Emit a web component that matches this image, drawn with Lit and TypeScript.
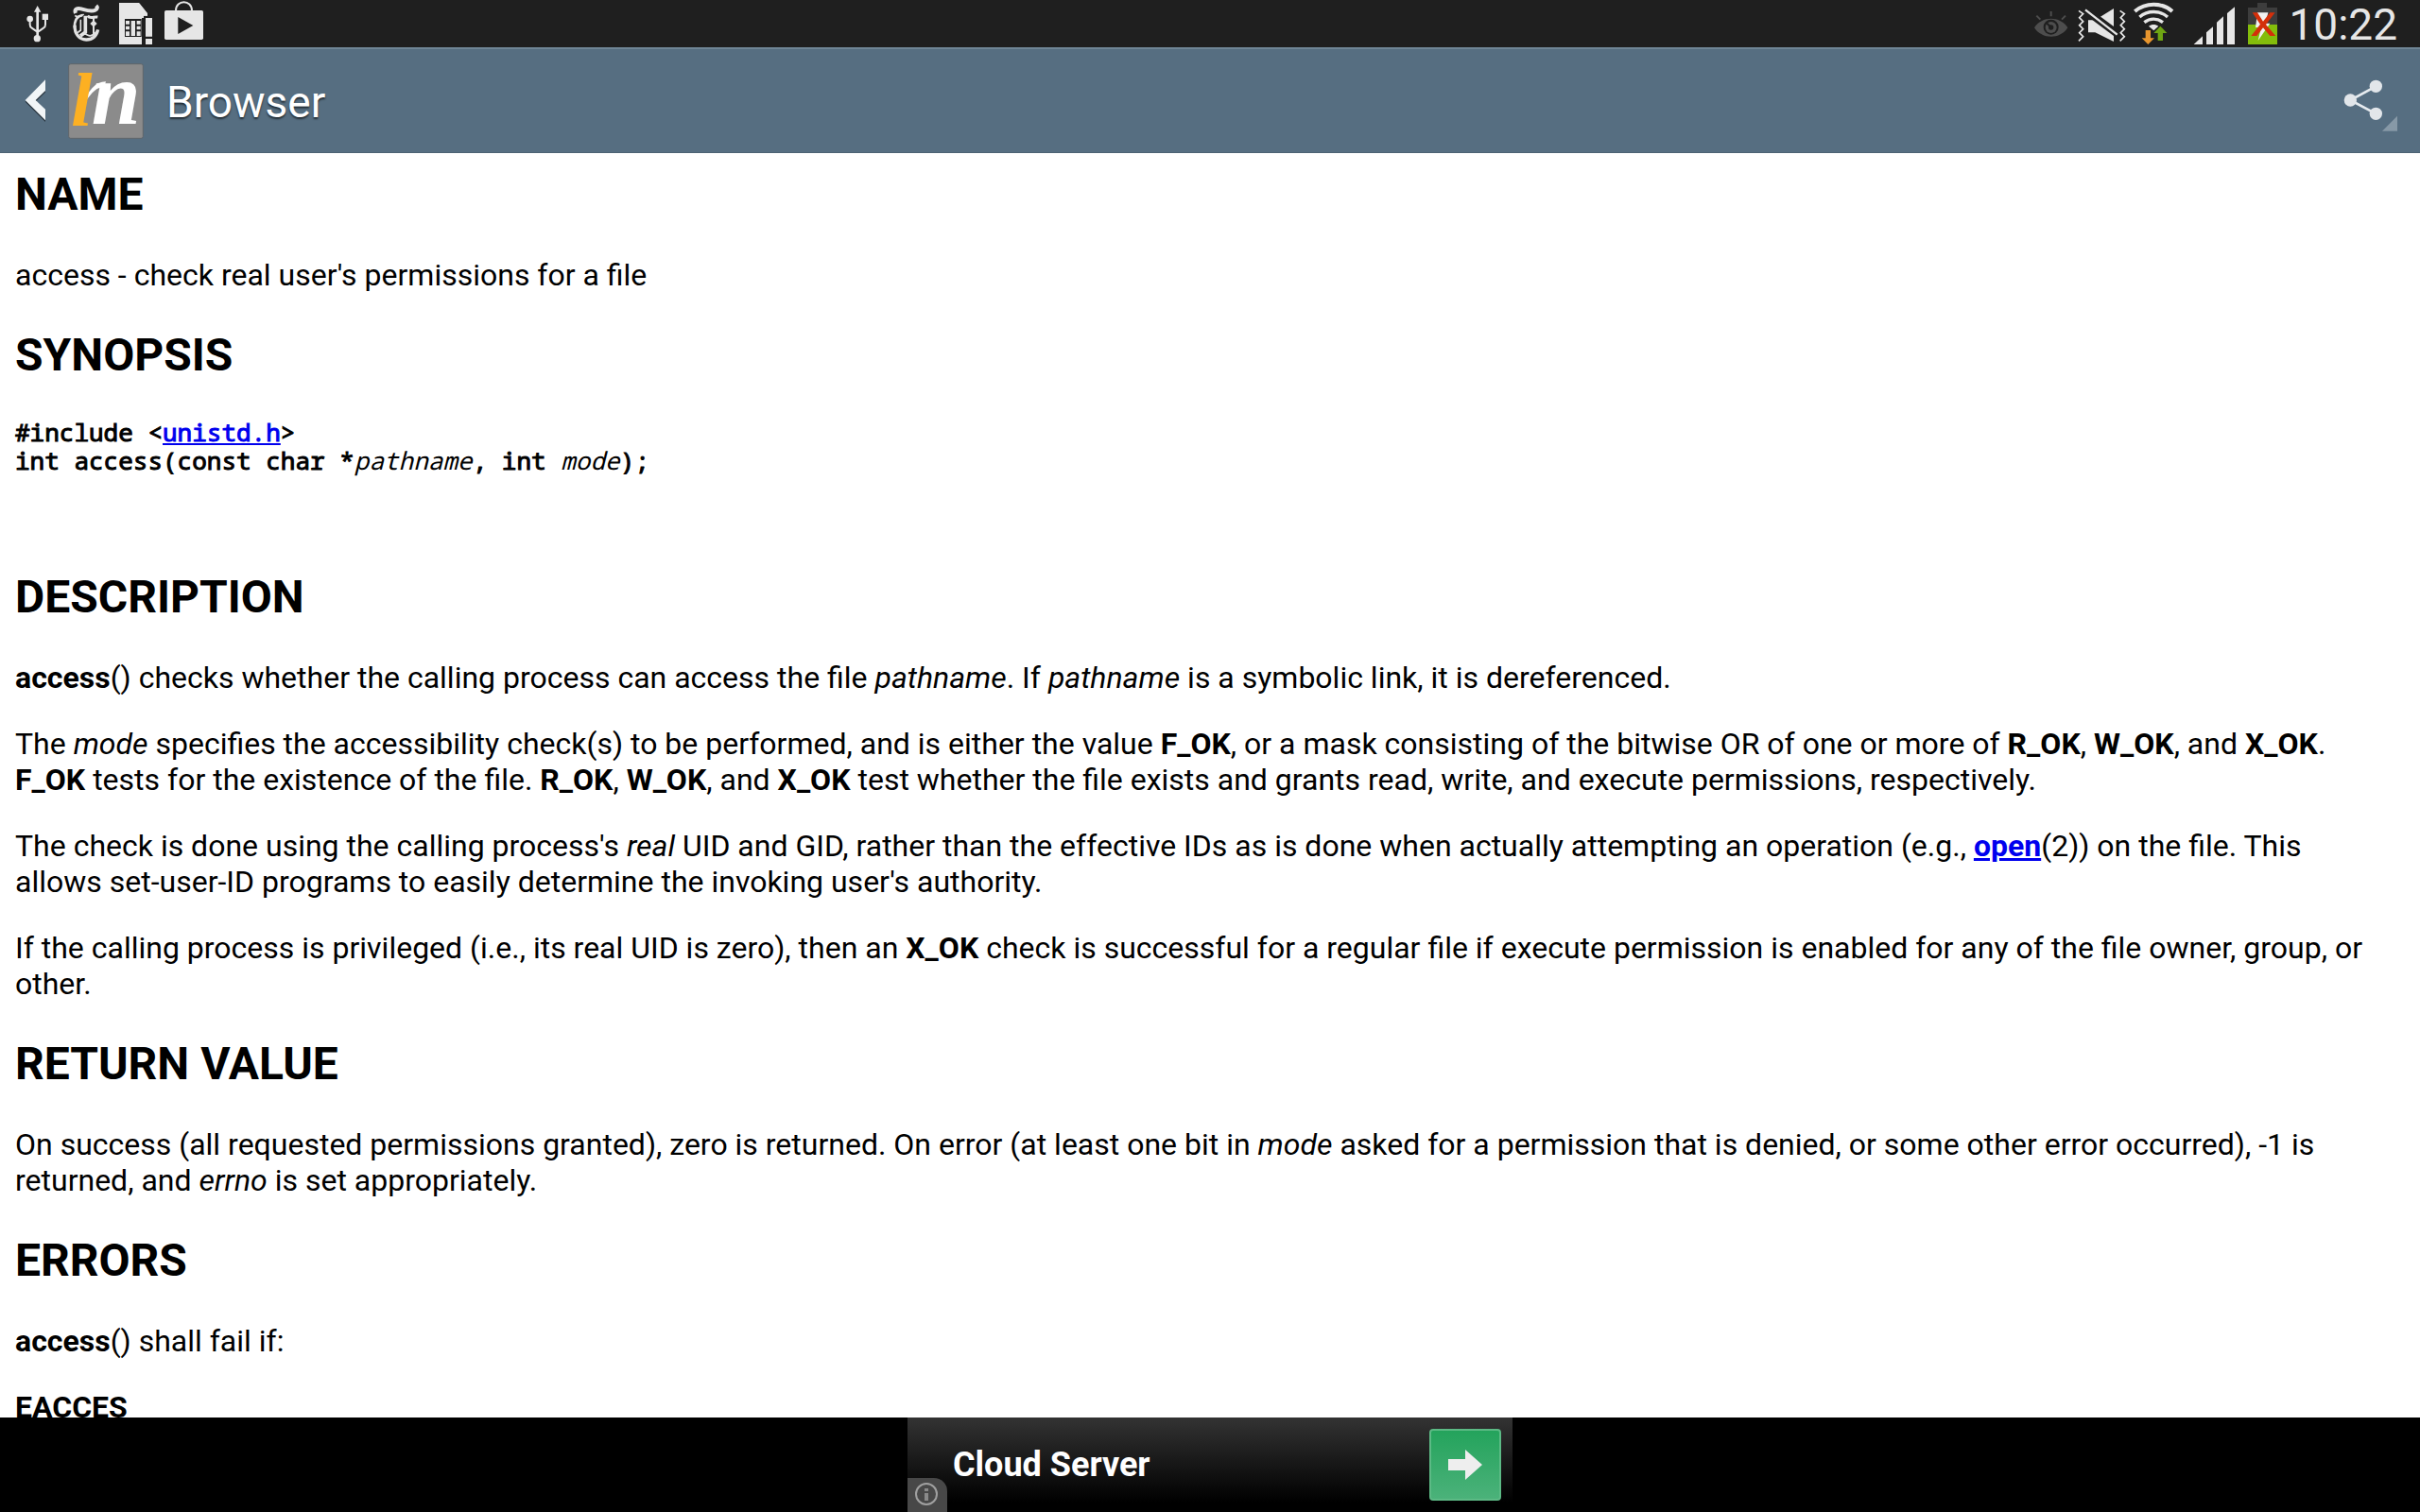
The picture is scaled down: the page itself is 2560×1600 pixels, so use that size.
import { LitElement, html, css } from "lit";
import { customElement } from "lit/decorators.js";

@customElement("status-bar")
class StatusBar extends LitElement {
  static styles = css`
    :host {
      display: flex;
      align-items: center;
      justify-content: space-between;
      height: 50px;
      padding: 0 24px 0 15px;
      background: #1f1f1f;
      color: #e6e6e6;
      font-family: Roboto, sans-serif;
    }
    .group {
      display: flex;
      align-items: center;
      gap: 4px;
    }
    .icon {
      display: block;
      height: 50px;
    }
    .clock {
      font-size: 46px;
      line-height: 54px;
      padding: 2px 0 0 1px;
    }
  `;

  render() {
    return html`
      <div class="group">
        <svg class="icon" width="48" viewBox="45 0 144 150" fill="#e6e6e6" aria-hidden="true">
          <path d="M119 18l11 20h-22z" />
          <rect x="115" y="34" width="8" height="84" />
          <circle cx="118" cy="122" r="11" />
          <circle cx="95" cy="60" r="10" />
          <rect x="134" y="44" width="19" height="19" />
          <path d="M95 66v12q0 8 6 11l16 11M144 62v16q0 8-6 11l-16 11" fill="none" stroke="#e6e6e6" stroke-width="6" />
        </svg>
        <svg class="icon" width="48" viewBox="201 0 144 150" aria-hidden="true">
          <g fill="none" stroke="#e2e2e2">
            <path d="M240 42c-5-12 4-18 18-14c18 5 32 10 44 4c8-4 8-9 3-14" stroke-width="12" />
            <path d="M238 49c6 7 20 4 28-4" stroke-width="5" />
            <path d="M262 48c-22 4-26 20-25 40" stroke-width="8" />
            <path d="M237 80c0 28 14 46 37 46c20 0 32-12 37-32" stroke-width="10" />
            <path d="M271 50v52l-16 12" stroke-width="11" />
            <path d="M256 62v34l-10 8" stroke-width="5" />
            <path d="M255 112c8-8 16-6 24 0c9 5 18 0 30-14" stroke-width="5" />
            <path d="M297 52v58" stroke-width="6" />
            <path d="M278 50c8 12 20 2 32 4" stroke-width="9" />
          </g>
          <path d="M286 75l11-11 11 11-11 11z" fill="#e2e2e2" />
        </svg>
        <svg class="icon" width="48" viewBox="357 0 144 150" aria-hidden="true">
          <path d="M378 9h63l27 34v14h-18v84h-72z" fill="#e6e6e6" />
          <rect x="396" y="60" width="53" height="57" fill="#1f1f1f" />
          <path d="M399 66h12v11h-12zM399 83h12v11h-12zM399 100h12v14h-12zM416 66h13v48h-13zM434 66h12v11h-12zM434 83h12v11h-12zM434 100h12v14h-12z" fill="#e6e6e6" />
          <path d="M456 50h34v96h-34z" fill="#1f1f1f" />
          <path d="M441 9l27 34v7h-12z" fill="#e6e6e6" />
          <path d="M462 57h21v59h-21zM462 123h21v18h-21z" fill="#e6e6e6" />
        </svg>
        <svg class="icon" width="48" viewBox="513 0 144 150" aria-hidden="true">
          <rect x="522" y="33" width="123" height="93" rx="5" fill="#e6e6e6" />
          <path d="M558 34c0-36 51-36 51 0" fill="none" stroke="#e6e6e6" stroke-width="6" />
          <path d="M565 54v54l48-27z" fill="#1f1f1f" />
        </svg>
      </div>
      <div class="group">
        <svg class="icon" width="40" viewBox="30 0 120 150" aria-hidden="true">
          <path d="M36 88c24-38 82-38 106 0c-24 38-82 38-106 0z" fill="#4d4d4d" />
          <circle cx="89" cy="86" r="24" fill="#1f1f1f" />
          <circle cx="89" cy="87" r="18" fill="#4d4d4d" />
          <path d="M89 87l-15-15" stroke="#1f1f1f" stroke-width="6" />
          <circle cx="89" cy="87" r="8" fill="#1f1f1f" />
          <path d="M89 36v16M43 50l12 12M135 50l-12 12" stroke="#4d4d4d" stroke-width="6" />
        </svg>
        <svg class="icon" width="58" viewBox="162 0 174 150" aria-hidden="true">
          <path d="M207 64v39h22l59 29V27l-59 37z" fill="#e6e6e6" />
          <path d="M190 26L308 114" stroke="#1f1f1f" stroke-width="24" />
          <path d="M198 31L299 110" stroke="#e6e6e6" stroke-width="7" />
          <path d="M177 34l14 10-12 12 12 12-12 12 12 12-12 12 12 12-14 14M308 34l14 10-12 12 12 12-12 12 12 12-12 12 12 12-14 14" fill="none" stroke="#e6e6e6" stroke-width="5" />
        </svg>
        <svg class="icon" width="44" viewBox="348 0 132 150" aria-hidden="true">
          <g fill="none" stroke="#e6e6e6">
            <path d="M355 36c34-29 86-29 119 0" stroke-width="12" />
            <path d="M370 54c26-22 64-22 89 0" stroke-width="10" />
            <path d="M385 71c18-14 41-14 59 0" stroke-width="10" />
          </g>
          <path d="M399 83c9-7 22-7 31 0l-15 14z" fill="#e6e6e6" />
          <path d="M389 96h16v25h12l-20 20-20-20h12z" fill="#e8962e" />
          <path d="M428 129h16v-24h13l-21-22-21 22h13z" fill="#6fa513" />
        </svg>
        <svg class="icon" width="62" viewBox="492 0 186 150" aria-hidden="true">
          <path d="M542 141l28-26v26zM582 103l21-18v56h-21zM615 71l21-19v89h-21zM648 42l24-20v119h-24z" fill="#e6e6e6" />
        </svg>
        <svg class="icon" width="46" viewBox="690 0 138 150" aria-hidden="true">
          <path d="M744 9h30v15h33v54h-93V24h30z" fill="#3d3d3d" />
          <rect x="714" y="78" width="93" height="63" fill="#84bd0b" />
          <path d="M744 40h34l-8 34h14l-38 55 10-42h-18z" fill="#f2f2f2" />
          <path d="M728 40h16l18 28 22-28h16l-29 38 31 36h-18l-22-26-20 26h-18l29-37z" fill="#d42f0a" />
        </svg>
        <time class="clock">10:22</time>
      </div>
    `;
  }
}

@customElement("action-bar")
class ActionBar extends LitElement {
  static styles = css`
    :host {
      display: flex;
      align-items: stretch;
      justify-content: space-between;
      box-sizing: border-box;
      height: 112px;
      border-top: 2px solid #6f8595;
      border-bottom: 1px solid #4d6373;
      background: #566e81;
      color: #fff;
      font-family: Roboto, sans-serif;
    }
    .bar-button {
      display: flex;
      align-items: center;
      margin: 0;
      padding: 0;
      border: 0;
      background: none;
      color: inherit;
      font: inherit;
    }
    .home {
      padding-left: 24px;
    }
    .brand {
      display: block;
    }
    .mark {
      font-family: "Liberation Serif", serif;
      font-style: italic;
      font-weight: 700;
    }
    .title {
      margin: 0;
      padding-top: 2px;
      font-size: 46px;
      font-weight: 400;
      line-height: 54px;
      text-shadow: 0 2px 2px rgba(0, 0, 0, 0.6);
    }
    .heading {
      display: flex;
      align-items: center;
      gap: 24px;
    }
  `;

  render() {
    return html`
      <div class="heading">
        <button class="bar-button home" type="button" aria-label="Navigate up">
          <svg class="brand" width="128" height="80" viewBox="72 198 384 240" aria-hidden="true">
            <path d="M80 320l64-65v35l-31 30 31 29v35z" fill="#28343e" />
            <path d="M80 315l64-65v35l-31 30 31 29v35z" fill="#f1f5f7" />
            <rect x="218" y="200" width="236" height="236" rx="6" fill="#8b8b8b" stroke="#5f656a" stroke-width="3" />
            <path d="M264 330C278 287 302 256 336 256l-6 20C308 268 284 300 264 330z" fill="#fff" />
            <text class="mark" x="290" y="390" font-size="280" fill="#fff">n</text>
            <text class="mark" x="226" y="397" font-size="242" fill="#fdb022">l</text>
          </svg>
        </button>
        <h1 class="title">Browser</h1>
      </div>
      <button class="bar-button" type="button" aria-label="Share">
        <svg width="86" height="108" viewBox="1002 156 258 324" aria-hidden="true">
          <path d="M1120 271l-81 44 81 43" fill="none" stroke="#e6ebef" stroke-width="8" />
          <g fill="#e2e6ea">
            <circle cx="1120" cy="271" r="20" />
            <circle cx="1039" cy="315" r="20" />
            <circle cx="1120" cy="358" r="20" />
          </g>
          <path d="M1188 365v48h-48z" fill="#8799a7" />
        </svg>
      </button>
    `;
  }
}

@customElement("manual-page")
class ManualPage extends LitElement {
  static styles = css`
    :host {
      display: block;
      padding: 16px 40px 0 16px;
      background: #fff;
      color: #000;
      font: 32px/38px Roboto, sans-serif;
    }
    .section {
      margin: 38px 0;
      font-size: 48px;
      font-weight: 700;
      line-height: 56px;
    }
    .section:first-child {
      margin-top: 0;
    }
    .text {
      margin: 32px 0;
    }
    .code {
      margin: 38px 0 102px;
      font: 26px/30px "Droid Sans Mono", "Noto Sans Mono", "DejaVu Sans Mono", monospace;
      -webkit-text-stroke: 1px currentColor;
    }
    .param {
      -webkit-text-stroke: 0;
    }
    .link {
      color: #0000ee;
      text-decoration: underline;
    }
  `;

  render() {
    return html`
      <h2 class="section">NAME</h2>
      <p class="text">access - check real user's permissions for a file</p>
      <h2 class="section">SYNOPSIS</h2>
      <pre class="code">#include &lt;<a class="link" href="#unistd">unistd.h</a>&gt;
int access(const char *<i class="param">pathname</i>, int <i class="param">mode</i>);</pre>
      <h2 class="section">DESCRIPTION</h2>
      <p class="text"><b>access</b>() checks whether the calling process can access the file <i>pathname</i>. If <i>pathname</i> is a symbolic link, it is dereferenced.</p>
      <p class="text">The <i>mode</i> specifies the accessibility check(s) to be performed, and is either the value <b>F_OK</b>, or a mask consisting of the bitwise OR of one or more of <b>R_OK</b>, <b>W_OK</b>, and <b>X_OK</b>. <b>F_OK</b> tests for the existence of the file. <b>R_OK</b>, <b>W_OK</b>, and <b>X_OK</b> test whether the file exists and grants read, write, and execute permissions, respectively.</p>
      <p class="text">The check is done using the calling process's <i>real</i> UID and GID, rather than the effective IDs as is done when actually attempting an operation (e.g., <a class="link" href="#open"><b>open</b></a>(2)) on the file. This allows set-user-ID programs to easily determine the invoking user's authority.</p>
      <p class="text">If the calling process is privileged (i.e., its real UID is zero), then an <b>X_OK</b> check is successful for a regular file if execute permission is enabled for any of the file owner, group, or other.</p>
      <h2 class="section">RETURN VALUE</h2>
      <p class="text">On success (all requested permissions granted), zero is returned. On error (at least one bit in <i>mode</i> asked for a permission that is denied, or some other error occurred), -1 is returned, and <i>errno</i> is set appropriately.</p>
      <h2 class="section">ERRORS</h2>
      <p class="text"><b>access</b>() shall fail if:</p>
      <p class="text"><b>EACCES</b></p>
    `;
  }
}

@customElement("ad-banner")
class AdBanner extends LitElement {
  static styles = css`
    :host {
      display: flex;
      justify-content: center;
      height: 100px;
      background: #000;
      font-family: Roboto, sans-serif;
    }
    .banner {
      position: relative;
      display: flex;
      align-items: center;
      justify-content: space-between;
      box-sizing: border-box;
      width: 640px;
      padding: 0 12px 0 48px;
      background: linear-gradient(#333, #000 90%);
    }
    .name {
      color: #fff;
      font-size: 36px;
      font-weight: 700;
      line-height: 42px;
      text-decoration: none;
    }
    .go {
      display: flex;
      align-items: center;
      justify-content: center;
      width: 76px;
      height: 76px;
      padding: 0;
      border: 2px solid #5cba85;
      border-radius: 4px;
      background: linear-gradient(#24a35c, #4bb27a);
    }
    .info {
      position: absolute;
      left: 0;
      bottom: 0;
      display: flex;
      align-items: center;
      justify-content: center;
      width: 42px;
      height: 36px;
      padding: 0;
      border: 0;
      border-top-right-radius: 14px;
      background: #484848;
    }
  `;

  render() {
    return html`
      <div class="banner">
        <a class="name" href="#ad">Cloud Server</a>
        <button class="go" type="button" aria-label="Open">
          <svg width="36" height="32" viewBox="0 0 36 32" aria-hidden="true">
            <path d="M0 10h18V0l18 16-18 16V22H0z" fill="#eee" />
          </svg>
        </button>
        <button class="info" type="button" aria-label="About this ad">
          <svg width="26" height="26" viewBox="0 0 26 26" aria-hidden="true">
            <circle cx="12" cy="12" r="11" fill="none" stroke="#a0a0a0" stroke-width="2" />
            <path d="M12 6v3M12 11v8" stroke="#8a8a8a" stroke-width="4" />
          </svg>
        </button>
      </div>
    `;
  }
}

@customElement("app-root")
class AppRoot extends LitElement {
  static styles = css`
    :host {
      display: flex;
      flex-direction: column;
      height: 100vh;
      overflow: hidden;
      background: #fff;
    }
    .fixed {
      flex: none;
    }
    .page {
      flex: 1;
      min-height: 0;
      overflow: hidden;
    }
  `;

  render() {
    return html`
      <status-bar class="fixed"></status-bar>
      <action-bar class="fixed"></action-bar>
      <manual-page class="page"></manual-page>
      <ad-banner class="fixed"></ad-banner>
    `;
  }
}
